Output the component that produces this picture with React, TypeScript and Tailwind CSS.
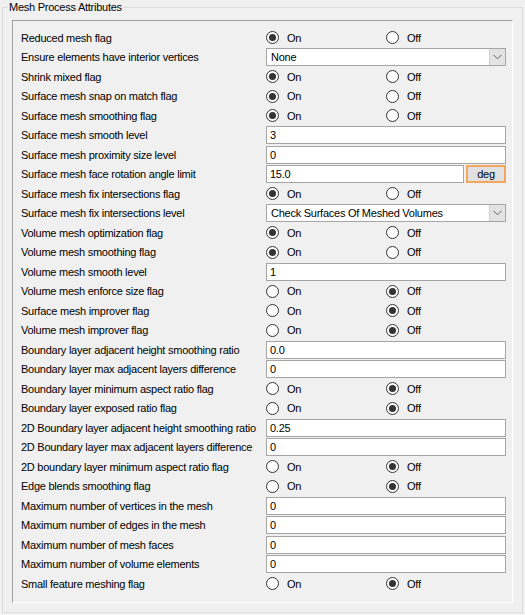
import React from "react";

type Row =
  | { label: string; kind: "radio"; on: boolean }
  | { label: string; kind: "text"; value: string; unit?: string }
  | { label: string; kind: "select"; value: string };

const rows: Row[] = [
  { label: "Reduced mesh flag", kind: "radio", on: true },
  { label: "Ensure elements have interior vertices", kind: "select", value: "None" },
  { label: "Shrink mixed flag", kind: "radio", on: true },
  { label: "Surface mesh snap on match flag", kind: "radio", on: true },
  { label: "Surface mesh smoothing flag", kind: "radio", on: true },
  { label: "Surface mesh smooth level", kind: "text", value: "3" },
  { label: "Surface mesh proximity size level", kind: "text", value: "0" },
  { label: "Surface mesh face rotation angle limit", kind: "text", value: "15.0", unit: "deg" },
  { label: "Surface mesh fix intersections flag", kind: "radio", on: true },
  { label: "Surface mesh fix intersections level", kind: "select", value: "Check Surfaces Of Meshed Volumes" },
  { label: "Volume mesh optimization flag", kind: "radio", on: true },
  { label: "Volume mesh smoothing flag", kind: "radio", on: true },
  { label: "Volume mesh smooth level", kind: "text", value: "1" },
  { label: "Volume mesh enforce size flag", kind: "radio", on: false },
  { label: "Surface mesh improver flag", kind: "radio", on: false },
  { label: "Volume mesh improver flag", kind: "radio", on: false },
  { label: "Boundary layer adjacent height smoothing ratio", kind: "text", value: "0.0" },
  { label: "Boundary layer max adjacent layers difference", kind: "text", value: "0" },
  { label: "Boundary layer minimum aspect ratio flag", kind: "radio", on: false },
  { label: "Boundary layer exposed ratio flag", kind: "radio", on: false },
  { label: "2D Boundary layer adjacent height smoothing ratio", kind: "text", value: "0.25" },
  { label: "2D Boundary layer max adjacent layers difference", kind: "text", value: "0" },
  { label: "2D boundary layer minimum aspect ratio flag", kind: "radio", on: false },
  { label: "Edge blends smoothing flag", kind: "radio", on: false },
  { label: "Maximum number of vertices in the mesh", kind: "text", value: "0" },
  { label: "Maximum number of edges in the mesh", kind: "text", value: "0" },
  { label: "Maximum number of mesh faces", kind: "text", value: "0" },
  { label: "Maximum number of volume elements", kind: "text", value: "0" },
  { label: "Small feature meshing flag", kind: "radio", on: false },
];

function Radio({ checked, label }: { checked: boolean; label: string }) {
  return (
    <div className="flex items-center w-[121px]">
      <span className="w-[13px] h-[13px] rounded-full border border-[#333333] bg-white flex items-center justify-center shrink-0">
        {checked && <span className="w-[7px] h-[7px] rounded-full bg-[#333333]" />}
      </span>
      <span className="ml-[8px]">{label}</span>
    </div>
  );
}

function Chevron() {
  return (
    <svg width="9" height="6" viewBox="0 0 9 6">
      <path d="M0.5 0.8 L4.5 4.8 L8.5 0.8" fill="none" stroke="#606060" strokeWidth="1" />
    </svg>
  );
}

function Control({ row }: { row: Row }) {
  if (row.kind === "radio") {
    return (
      <div className="flex items-center h-full">
        <Radio checked={row.on} label="On" />
        <Radio checked={!row.on} label="Off" />
      </div>
    );
  }
  if (row.kind === "select") {
    return (
      <div className="flex items-center h-full">
        <div className="flex w-full h-[18px] border border-[#a6a6a6] bg-white">
          <div className="flex-1 flex items-center pl-[4px]">{row.value}</div>
          <div className="w-[16px] bg-[#e3e3e3] border-l border-[#cfcfcf] flex items-center justify-center">
            <Chevron />
          </div>
        </div>
      </div>
    );
  }
  return (
    <div className="flex items-center h-full gap-[2px]">
      <div className="flex-1 h-[18px] border border-[#a5a5a5] bg-white flex items-center pl-[3px]">{row.value}</div>
      {row.unit && (
        <div className="w-[40px] h-[18px] border-2 border-[#f2a65e] bg-[#e1e1e1] flex items-center justify-center">
          {row.unit}
        </div>
      )}
    </div>
  );
}

export default function App() {
  return (
    <div
      className="w-[525px] h-[615px] bg-[#f0f0f0] text-black text-[11px] leading-[14px] tracking-[-0.25px]"
      style={{ fontFamily: '"Liberation Sans", Arial, sans-serif' }}
    >
      <fieldset className="mx-[2px] border border-[#dcdcdc] px-[9px] pb-[9px]">
        <legend className="ml-[-4px] px-[1px] leading-[14px]">Mesh Process Attributes</legend>
        <div className="mt-[6px] border-l border-t border-[#a0a0a0] border-r border-b border-r-white border-b-white pt-[7px] pl-[8px] pr-[6px] pb-[8px] h-[583px]">
          <div className="grid grid-cols-[245px_240px]">
            {rows.map((r, i) => (
              <React.Fragment key={i}>
                <div className="h-[19.5px] flex items-center whitespace-nowrap">{r.label}</div>
                <div className="h-[19.5px]">
                  <Control row={r} />
                </div>
              </React.Fragment>
            ))}
          </div>
        </div>
      </fieldset>
    </div>
  );
}
